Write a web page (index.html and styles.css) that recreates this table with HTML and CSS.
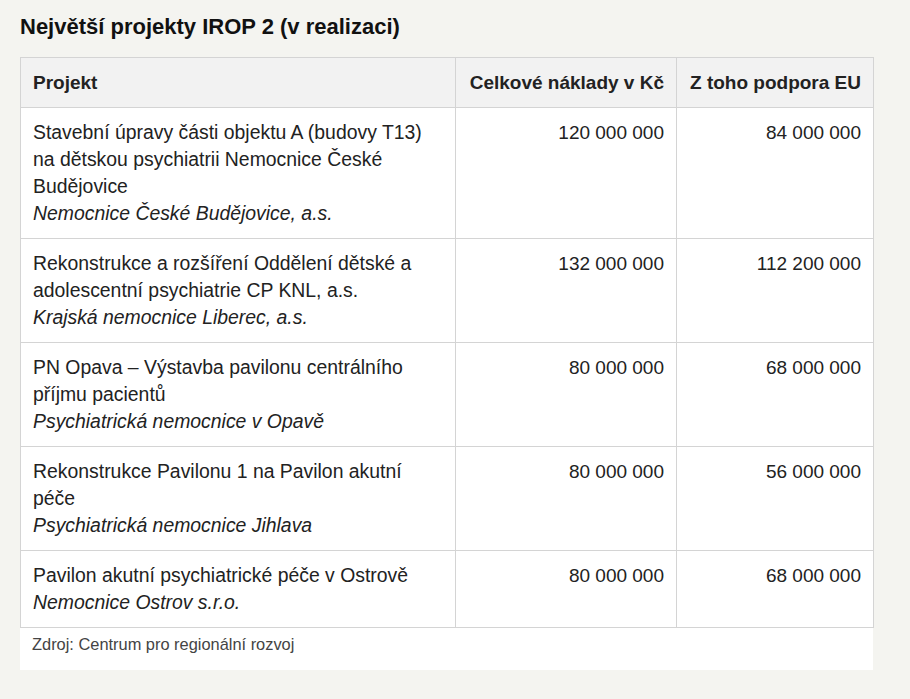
FILE: index.html
```html
<!DOCTYPE html>
<html lang="cs">
<head>
<meta charset="utf-8">
<title>Největší projekty IROP 2</title>
<link rel="stylesheet" href="styles.css">
</head>
<body>
<div class="wrap">
  <h2 class="title">Největší projekty IROP 2 (v realizaci)</h2>
  <div class="card">
    <table class="tbl">
      <colgroup>
        <col class="c1"><col class="c2"><col class="c3">
      </colgroup>
      <thead>
        <tr>
          <th class="left">Projekt</th>
          <th class="num">Celkové náklady v Kč</th>
          <th class="num">Z toho podpora EU</th>
        </tr>
      </thead>
      <tbody>
        <tr>
          <td class="proj">Stavební úpravy části objektu A (budovy T13) na dětskou psychiatrii Nemocnice České Budějovice<br><em>Nemocnice České Budějovice, a.s.</em></td>
          <td class="num">120 000 000</td>
          <td class="num">84 000 000</td>
        </tr>
        <tr>
          <td class="proj">Rekonstrukce a rozšíření Oddělení dětské a adolescentní psychiatrie CP KNL, a.s.<br><em>Krajská nemocnice Liberec, a.s.</em></td>
          <td class="num">132 000 000</td>
          <td class="num">112 200 000</td>
        </tr>
        <tr>
          <td class="proj">PN Opava – Výstavba pavilonu centrálního příjmu pacientů<br><em>Psychiatrická nemocnice v Opavě</em></td>
          <td class="num">80 000 000</td>
          <td class="num">68 000 000</td>
        </tr>
        <tr>
          <td class="proj">Rekonstrukce Pavilonu 1 na Pavilon akutní péče<br><em>Psychiatrická nemocnice Jihlava</em></td>
          <td class="num">80 000 000</td>
          <td class="num">56 000 000</td>
        </tr>
        <tr>
          <td class="proj">Pavilon akutní psychiatrické péče v Ostrově<br><em>Nemocnice Ostrov s.r.o.</em></td>
          <td class="num">80 000 000</td>
          <td class="num">68 000 000</td>
        </tr>
      </tbody>
    </table>
    <p class="source">Zdroj: Centrum pro regionální rozvoj</p>
  </div>
</div>
</body>
</html>
```
FILE: styles.css
```css
html, body {
  margin: 0;
  padding: 0;
  background: #f4f4f0;
}
body {
  font-family: "Liberation Sans", Arial, sans-serif;
  color: #222;
}
.wrap {
  padding: 14px 37px 20px 20px;
}
.title {
  margin: 0 0 17px 0;
  font-size: 22px;
  line-height: 26px;
  font-weight: bold;
  color: #111;
}
.card {
  background: #fff;
  width: 853px;
}
.tbl {
  width: 853px;
  border-collapse: collapse;
  table-layout: fixed;
  font-size: 19px;
  line-height: 27px;
}
.c1 { width: 435px; }
.c2 { width: 221px; }
.c3 { width: 197px; }
.tbl th, .tbl td {
  border: 1px solid #d4d4d4;
  padding: 11px 12px 11px 12px;
  vertical-align: top;
  color: #222;
}
.tbl td.proj {
  font-size: 19.4px;
}
.tbl th {
  background: #f2f2f2;
  font-weight: bold;
  padding-top: 11px;
  padding-bottom: 11px;
}
.tbl th.left { text-align: left; }
.tbl .num { text-align: right; }
.tbl em { font-style: italic; }
.source {
  margin: 0;
  padding: 6px 12px 15px 12px;
  font-size: 16.4px;
  line-height: 21px;
  color: #444;
}
```
